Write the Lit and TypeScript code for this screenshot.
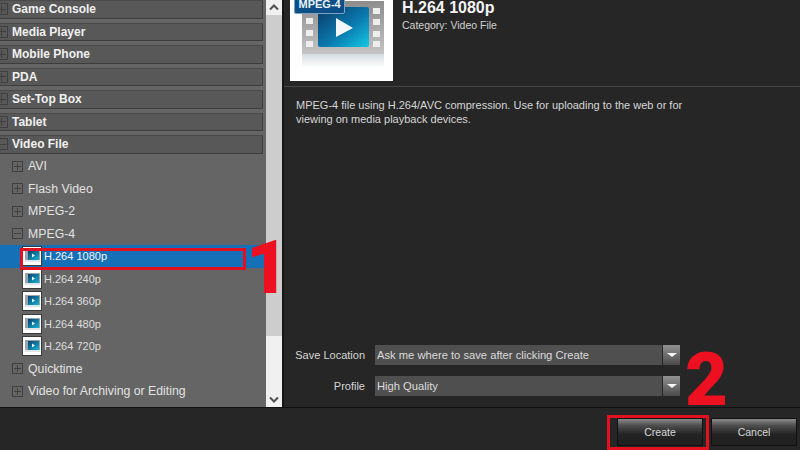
import { LitElement, html, css, svg } from "lit";
import { customElement } from "lit/decorators.js";

const video = (id: string) => svg`
  <defs>
    <linearGradient id="${id}f" x1="0" y1="0" x2="0" y2="1"><stop offset="0" stop-color="#8d8d8d"/><stop offset="1" stop-color="#c4c4c4"/></linearGradient>
    <linearGradient id="${id}s" x1="0" y1="0" x2="1" y2="1"><stop offset="0" stop-color="#0a3a66"/><stop offset=".55" stop-color="#0b78ad"/><stop offset="1" stop-color="#12c8e4"/></linearGradient>
    <linearGradient id="${id}r" x1="0" y1="0" x2="0" y2="1"><stop offset="0" stop-color="#d5dde0"/><stop offset="1" stop-color="#fff"/></linearGradient>
  </defs>
  <rect width="103" height="81" fill="#fff"/>
  <rect x="12" y="1" width="82" height="53" fill="url(#${id}f)"/>
  <rect x="12" y="54" width="82" height="14" fill="url(#${id}r)"/>
  <rect x="28" y="7" width="51" height="40" rx="2" fill="url(#${id}s)"/>
  <path d="M46 18 L63 28 L46 37 Z" fill="#f4f7f9"/>
  <rect x="16" y="18" width="7" height="6" fill="#eee"/><rect x="16" y="30" width="7" height="6" fill="#eee"/><rect x="16" y="41" width="7" height="6" fill="#eee"/>
  <rect x="83" y="8" width="7" height="6" fill="#eee"/><rect x="83" y="19" width="7" height="6" fill="#eee"/><rect x="83" y="31" width="7" height="6" fill="#eee"/><rect x="83" y="41" width="7" height="6" fill="#eee"/>
`;

const tiny = (id: string) => svg`
  <defs><linearGradient id="${id}" x1="0" y1="0" x2="1" y2="1"><stop offset="0" stop-color="#0a3f6e"/><stop offset="1" stop-color="#14b4d4"/></linearGradient></defs>
  <rect width="18" height="18" fill="#fff"/>
  <rect x="2" y="3" width="15" height="10" fill="#9aa5aa"/>
  <rect x="5" y="4" width="11" height="9" fill="url(#${id})"/>
  <path d="M9 6.5 L12 8.5 L9 10.5 Z" fill="#e6f2f6"/>
  <rect x="2" y="13" width="15" height="2" fill="#dfe6e8"/>
`;

const groups = ["Game Console", "Media Player", "Mobile Phone", "PDA", "Set-Top Box", "Tablet"];

@customElement("app-root")
export class AppRoot extends LitElement {
  static styles = css`
    :host { display: block; width: 800px; height: 450px; position: relative; overflow: hidden; background: #262626; font-family: "Liberation Sans", Arial, sans-serif; }
    .top { display: flex; height: 407px; }
    .tree { width: 266px; height: 407px; overflow: hidden; background: #656565; flex: none; }
    .list { display: flex; flex-direction: column; }
    .group { height: 18.5px; margin: 0 3px 4px 0; background: #585858; border: 1px solid #3d3d3d; border-left: 0; border-top-color: #4a4a4a; box-sizing: border-box; display: flex; align-items: center; gap: 4px; color: #f0f0f0; font-size: 12px; font-weight: bold; }
    .group.last { margin-bottom: 1.5px; }
    .box { width: 11px; height: 11px; flex: none; box-sizing: border-box; border: 1px solid #3f3f3f; position: relative; }
    .box::before { content: ""; position: absolute; left: 1px; right: 1px; top: 4px; height: 1px; background: #3f3f3f; }
    .box.plus::after { content: ""; position: absolute; top: 1px; bottom: 1px; left: 4px; width: 1px; background: #3f3f3f; }
    .group .box { margin-left: -4px; width: 12px; height: 12px; }
    .group .box::before { top: 4.5px; }
    .item { height: 22.5px; display: flex; align-items: center; gap: 5px; padding-left: 12px; color: #e2e2e2; font-size: 12.3px; }
    .leaf { height: 22.5px; display: flex; align-items: center; gap: 3px; padding-left: 23px; color: #dedede; font-size: 11px; }
    .leaf svg { width: 18px; height: 18px; flex: none; outline: 1px solid #3a3a3a; }
    .leaf.sel { background: #1670b8; color: #f4f4f4; }
    .bar { width: 16px; flex: none; background: #f0f0f0; display: flex; flex-direction: column; }
    .bar .btn { height: 15px; display: flex; align-items: center; justify-content: center; }
    .bar .btn svg { width: 10px; height: 7px; }
    .thumb { height: 321px; background: #cdcdcd; }
    .sp { flex: 1; }
    .right { flex: 1; margin-left: 0; border-left: 2px solid #151515; display: flex; flex-direction: column; color: #d6d6d6; }
    .head { height: 87px; box-sizing: border-box; padding-left: 6px; border-bottom: 1px solid #454545; display: flex; gap: 9px; flex: none; }
    .art { width: 103px; height: 81px; display: block; overflow: hidden; position: relative; flex: none; }
    .art svg { display: block; }
    .tag { position: absolute; left: 4px; top: -5px; height: 17px; padding: 0 3.5px; background: #0b4f86; border: 1px solid #7da3c1; border-radius: 2px; color: #e9f1f7; font-size: 11px; font-weight: bold; line-height: 17px; }
    h1 { margin: 0; color: #f3f3f3; font-size: 16px; font-weight: bold; line-height: 16px; }
    .cat { margin-top: 3px; font-size: 10.5px; line-height: 13px; color: #d2d2d2; }
    .desc { margin: 11px 0 0 12px; font-size: 11px; line-height: 14px; width: 400px; }
    .form { margin-top: auto; padding-bottom: 11px; display: flex; flex-direction: column; gap: 11px; }
    .field { display: flex; align-items: center; font-size: 11px; }
    .field label { width: 81px; text-align: right; margin-right: 10px; }
    .select { width: 287px; height: 20px; background: #4f4f4f; color: #dcdcdc; line-height: 20px; padding-left: 2px; box-sizing: border-box; font-size: 11.2px; }
    .drop { width: 17px; height: 20px; margin-left: 1px; background: linear-gradient(#929292, #4a4a4a); display: flex; align-items: center; justify-content: center; }
    .drop::after { content: ""; border: 5px solid transparent; border-top: 4px solid #f6f6f6; border-bottom: 0; }
    .foot { height: 43px; border-top: 1px solid #111; box-sizing: border-box; display: flex; justify-content: flex-end; align-items: center; gap: 8px; padding-right: 3px; padding-top: 5px; }
    button { width: 86px; height: 28px; padding: 0; border: 1px solid #111; background: linear-gradient(#8a8a8a 0, #4e4e4e 25%, #222 60%, #202020); color: #d8d8d8; font: 10.5px "Liberation Sans", Arial, sans-serif; }
    .mark { position: absolute; border: 3px solid #e3101f; box-sizing: border-box; }
    .m1 { left: 20px; top: 248px; width: 226px; height: 22px; }
    .m2 { left: 607px; top: 415px; width: 102px; height: 35px; }
    .num { position: absolute; color: #ec1020; font-family: Roboto, "Liberation Sans", sans-serif; font-size: 74px; font-weight: 900; line-height: 74px; }
    .n1 { left: 246px; top: 231px; }
    .n2 { left: 685px; top: 343px; }
  `;

  render() {
    const item = (t: string, open = false) => html`<div class="item"><span class="box ${open ? "" : "plus"}"></span>${t}</div>`;
    const leaf = (t: string, i: number, sel = false) => html`<div class="leaf ${sel ? "sel" : ""}"><svg viewBox="0 0 18 18">${tiny("t" + i)}</svg>${t}</div>`;
    return html`
      <div class="top">
        <div class="tree"><div class="list">
          ${groups.map((g) => html`<div class="group"><span class="box plus"></span>${g}</div>`)}
          <div class="group last"><span class="box"></span>Video File</div>
          ${item("AVI")}${item("Flash Video")}${item("MPEG-2")}${item("MPEG-4", true)}
          ${leaf("H.264 1080p", 0, true)}${leaf("H.264 240p", 1)}${leaf("H.264 360p", 2)}${leaf("H.264 480p", 3)}${leaf("H.264 720p", 4)}
          ${item("Quicktime")}${item("Video for Archiving or Editing")}
        </div></div>
        <div class="bar">
          <div class="btn"><svg viewBox="0 0 10 7"><path d="M1 5.5 L5 1.5 L9 5.5" fill="none" stroke="#505050" stroke-width="2"/></svg></div>
          <div class="thumb"></div><div class="sp"></div>
          <div class="btn"><svg viewBox="0 0 10 7"><path d="M1 1.5 L5 5.5 L9 1.5" fill="none" stroke="#505050" stroke-width="2"/></svg></div>
        </div>
        <div class="right">
          <div class="head">
            <div class="art"><svg width="103" height="81" viewBox="0 0 103 81">${video("big")}</svg><span class="tag">MPEG-4</span></div>
            <div><h1>H.264 1080p</h1><div class="cat">Category: Video File</div></div>
          </div>
          <div class="desc">MPEG-4 file using H.264/AVC compression. Use for uploading to the web or for viewing on media playback devices.</div>
          <div class="form">
            <div class="field"><label>Save Location</label><div class="select">Ask me where to save after clicking Create</div><div class="drop"></div></div>
            <div class="field"><label>Profile</label><div class="select">High Quality</div><div class="drop"></div></div>
          </div>
        </div>
      </div>
      <div class="foot"><button>Create</button><button>Cancel</button></div>
      <div class="mark m1"></div><div class="mark m2"></div>
      <div class="num n1">1</div><div class="num n2">2</div>
    `;
  }
}
